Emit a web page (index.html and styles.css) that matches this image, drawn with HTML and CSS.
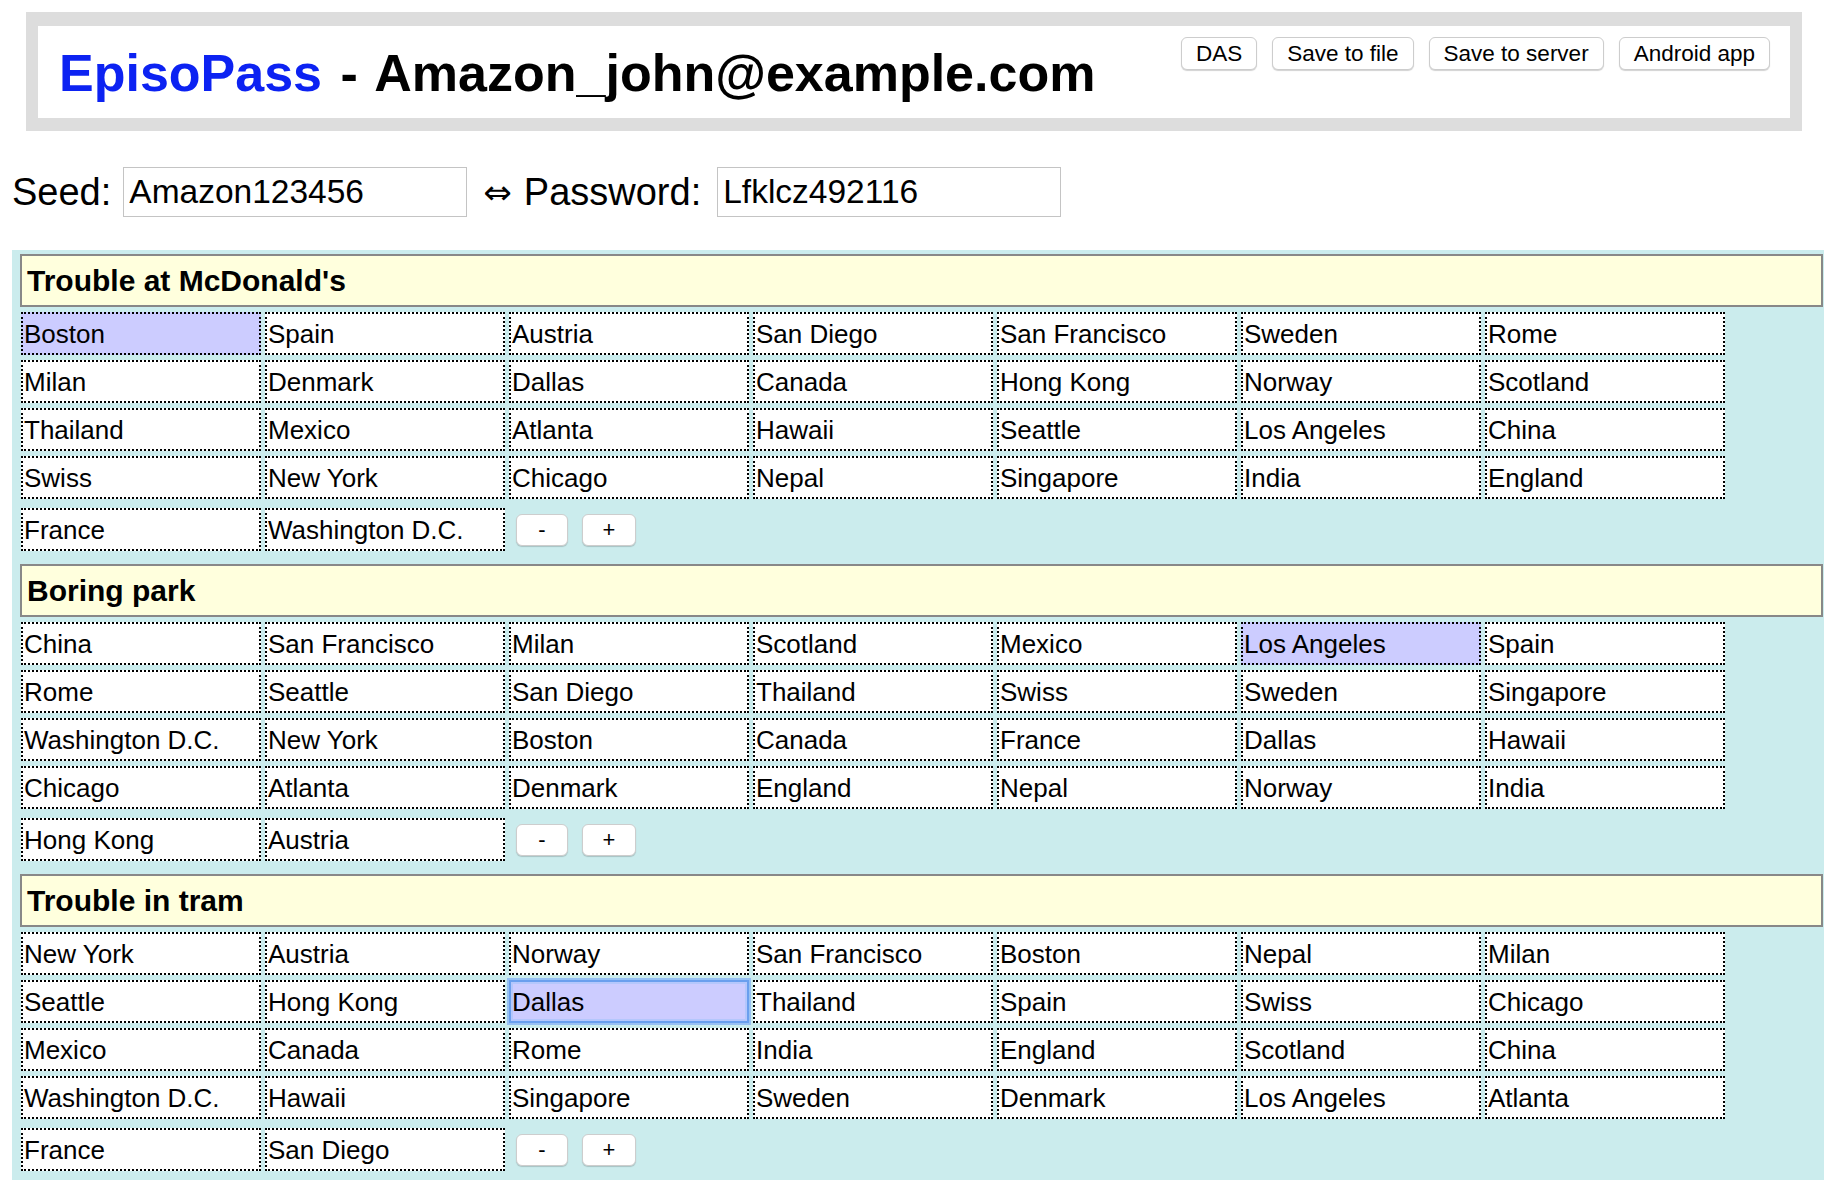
FILE: index.html
```html
<!DOCTYPE html>
<html>
<head>
<meta charset="utf-8">
<title>EpisoPass</title>
<link rel="stylesheet" href="styles.css">
</head>
<body>
<div class="topbar">
  <div class="topinner">
    <h1 class="title"><span class="brand">EpisoPass</span> - Amazon_john@example.com</h1>
    <div class="actions">
      <button class="btn">DAS</button>
      <button class="btn">Save to file</button>
      <button class="btn">Save to server</button>
      <button class="btn">Android app</button>
    </div>
  </div>
</div>

<div class="seedrow">
  <span class="lbl lbl-seed">Seed:</span>
  <input class="field" type="text" value="Amazon123456">
  <span class="arrow">&#8660;</span>
  <span class="lbl lbl-pass">Password:</span>
  <input class="field" type="text" value="Lfklcz492116">
</div>

<div class="panel">
  <section class="qa">
    <div class="qhead">Trouble at McDonald's</div>
    <div class="grid">
      <div class="cell sel">Boston</div><div class="cell">Spain</div><div class="cell">Austria</div><div class="cell">San Diego</div><div class="cell">San Francisco</div><div class="cell">Sweden</div><div class="cell">Rome</div>
      <div class="cell">Milan</div><div class="cell">Denmark</div><div class="cell">Dallas</div><div class="cell">Canada</div><div class="cell">Hong Kong</div><div class="cell">Norway</div><div class="cell">Scotland</div>
      <div class="cell">Thailand</div><div class="cell">Mexico</div><div class="cell">Atlanta</div><div class="cell">Hawaii</div><div class="cell">Seattle</div><div class="cell">Los Angeles</div><div class="cell">China</div>
      <div class="cell">Swiss</div><div class="cell">New York</div><div class="cell">Chicago</div><div class="cell">Nepal</div><div class="cell">Singapore</div><div class="cell">India</div><div class="cell">England</div>
    </div>
    <div class="lastrow">
      <div class="cell">France</div><div class="cell">Washington D.C.</div>
      <button class="sbtn minus">-</button><button class="sbtn plus">+</button>
    </div>
  </section>

  <section class="qa">
    <div class="qhead">Boring park</div>
    <div class="grid">
      <div class="cell">China</div><div class="cell">San Francisco</div><div class="cell">Milan</div><div class="cell">Scotland</div><div class="cell">Mexico</div><div class="cell sel">Los Angeles</div><div class="cell">Spain</div>
      <div class="cell">Rome</div><div class="cell">Seattle</div><div class="cell">San Diego</div><div class="cell">Thailand</div><div class="cell">Swiss</div><div class="cell">Sweden</div><div class="cell">Singapore</div>
      <div class="cell">Washington D.C.</div><div class="cell">New York</div><div class="cell">Boston</div><div class="cell">Canada</div><div class="cell">France</div><div class="cell">Dallas</div><div class="cell">Hawaii</div>
      <div class="cell">Chicago</div><div class="cell">Atlanta</div><div class="cell">Denmark</div><div class="cell">England</div><div class="cell">Nepal</div><div class="cell">Norway</div><div class="cell">India</div>
    </div>
    <div class="lastrow">
      <div class="cell">Hong Kong</div><div class="cell">Austria</div>
      <button class="sbtn minus">-</button><button class="sbtn plus">+</button>
    </div>
  </section>

  <section class="qa">
    <div class="qhead">Trouble in tram</div>
    <div class="grid">
      <div class="cell">New York</div><div class="cell">Austria</div><div class="cell">Norway</div><div class="cell">San Francisco</div><div class="cell">Boston</div><div class="cell">Nepal</div><div class="cell">Milan</div>
      <div class="cell">Seattle</div><div class="cell">Hong Kong</div><div class="cell sel focus">Dallas</div><div class="cell">Thailand</div><div class="cell">Spain</div><div class="cell">Swiss</div><div class="cell">Chicago</div>
      <div class="cell">Mexico</div><div class="cell">Canada</div><div class="cell">Rome</div><div class="cell">India</div><div class="cell">England</div><div class="cell">Scotland</div><div class="cell">China</div>
      <div class="cell">Washington D.C.</div><div class="cell">Hawaii</div><div class="cell">Singapore</div><div class="cell">Sweden</div><div class="cell">Denmark</div><div class="cell">Los Angeles</div><div class="cell">Atlanta</div>
    </div>
    <div class="lastrow">
      <div class="cell">France</div><div class="cell">San Diego</div>
      <button class="sbtn minus">-</button><button class="sbtn plus">+</button>
    </div>
  </section>
</div>
</body>
</html>
```

FILE: styles.css
```css
* { box-sizing: border-box; }

html, body {
  margin: 0;
  padding: 0;
  background: #ffffff;
  font-family: "Liberation Sans", Arial, Helvetica, sans-serif;
  color: #000;
  overflow: hidden;
}

/* ---------- top bar ---------- */
.topbar {
  margin: 12px 30px 0 26px;
  padding: 14px 12px 13px 12px;
  background: #dddddd;
}

.topinner {
  background: #ffffff;
  height: 92px;
  padding: 0 20px 0 21px;
  display: flex;
  justify-content: space-between;
  align-items: flex-start;
}

.title {
  margin: 0;
  padding-top: 17px;
  font-size: 52px;
  line-height: 60px;
  font-weight: bold;
  word-spacing: 4px;
  white-space: nowrap;
}

.brand { color: #0c22f2; }

.actions {
  display: flex;
  gap: 15px;
  padding-top: 11px;
}

.btn {
  height: 33px;
  padding: 0 14px;
  font-family: "Liberation Sans", Arial, sans-serif;
  font-size: 22.5px;
  color: #000;
  background: #ffffff;
  border: 1px solid #cdcdcd;
  border-radius: 6px;
  box-shadow: 0 1px 1px rgba(0, 0, 0, 0.18);
  line-height: 31px;
}

/* ---------- seed row ---------- */
.seedrow {
  display: flex;
  align-items: center;
  height: 50px;
  margin: 36px 0 0 12px;
}

.lbl {
  font-size: 38px;
  line-height: 42px;
  white-space: nowrap;
}

.lbl-seed { margin-right: 12px; }
.lbl-pass { margin-right: 16px; }

.arrow {
  font-family: "DejaVu Sans", sans-serif;
  font-size: 34px;
  line-height: 42px;
  margin: 0 12px 0 16px;
}

.field {
  width: 344px;
  height: 50px;
  padding: 0 5px;
  border: 1px solid #c4c4c4;
  background: #fff;
  font-family: "Liberation Sans", Arial, sans-serif;
  font-size: 33.5px;
  color: #000;
  outline: none;
}

/* ---------- panel ---------- */
.panel {
  margin: 33px 8px 0 12px;
  padding: 4px 1px 0 8px;
  background: #cbeced;
}

.qa {
  padding-bottom: 13px;
}

.qhead {
  height: 53px;
  margin-bottom: 5px;
  padding: 0 5px;
  border: 2px solid #888888;
  background: #ffffdd;
  font-size: 30px;
  font-weight: bold;
  line-height: 49px;
  white-space: nowrap;
}

.grid {
  display: grid;
  grid-template-columns: repeat(7, 240px);
  column-gap: 4px;
  row-gap: 5px;
  padding-left: 1px;
}

.cell {
  height: 43px;
  padding: 1px 2px 0 1px;
  border: 2px dotted #000;
  background: #ffffff;
  font-size: 26px;
  line-height: 38px;
  white-space: nowrap;
  overflow: hidden;
}

.cell.sel { background: #ccccff; }

.cell.focus {
  border: 2px solid #6a9fee;
  box-shadow: 0 0 0 2px rgba(130, 175, 245, 0.7), inset 0 0 0 2px rgba(160, 195, 250, 0.55);
}

.lastrow {
  display: flex;
  align-items: flex-start;
  margin-top: 9px;
  padding-left: 1px;
  gap: 4px;
}

.lastrow .cell { width: 240px; }

.sbtn {
  height: 32px;
  margin-top: 6px;
  font-family: "Liberation Sans", Arial, sans-serif;
  font-size: 22px;
  color: #000;
  background: #ffffff;
  border: 1px solid #cdcdcd;
  border-radius: 6px;
  box-shadow: 0 1px 1px rgba(0, 0, 0, 0.18);
  padding: 0;
}

.sbtn.minus { width: 52px; margin-left: 7px; }
.sbtn.plus { width: 54px; margin-left: 10px; }
```
